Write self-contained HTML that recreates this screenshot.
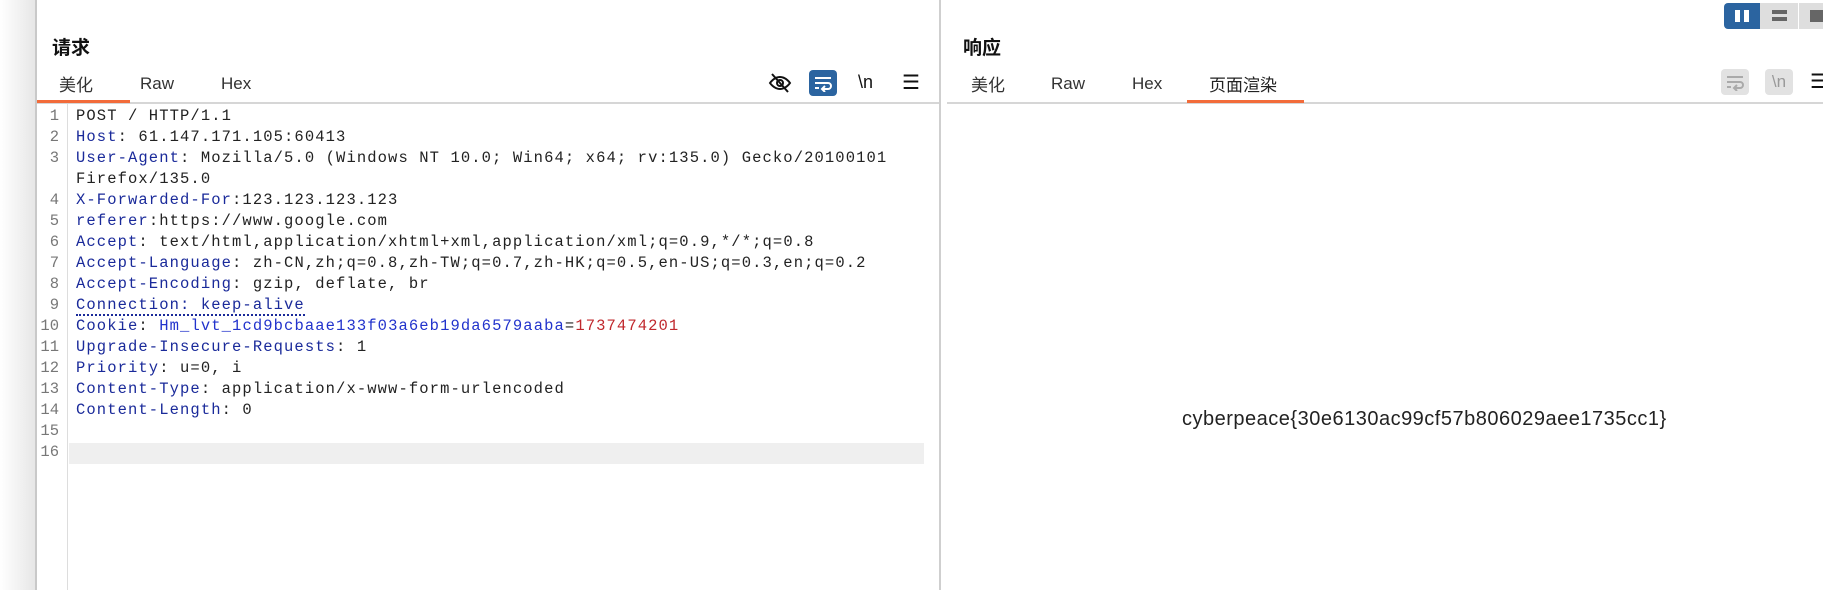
<!DOCTYPE html>
<html><head><meta charset="utf-8"><style>
*{margin:0;padding:0;box-sizing:border-box}
body{width:1823px;height:590px;background:#fff;position:relative;overflow:hidden;font-family:"Liberation Sans","Noto Sans CJK SC",sans-serif}
.a{position:absolute}
.strip{left:0;top:0;width:36px;height:590px;background:linear-gradient(90deg,#fff,#e6e6e6)}
.sl{left:35px;top:0;width:2px;height:590px;background:#c9c9c9}
.title{font-size:19px;font-weight:bold;color:#111}
.tab{font-size:17px;color:#333;top:74px;line-height:20px}
.cj{top:76px}
.code{font-family:"Liberation Mono",monospace;font-size:15.5px;letter-spacing:1.1px;color:#222;line-height:21px;white-space:pre}
.k{color:#1a2a9a}
.num{font-family:"Liberation Mono",monospace;font-size:15.5px;color:#777;line-height:21px;text-align:right;width:26px;left:33px;top:106px;white-space:pre}
</style></head><body>
<div class="a strip"></div><div class="a sl"></div>
<div class="a" style="left:939px;top:0;width:8px;height:590px;background:#fff;border-left:2px solid #cfcfcf"></div>

<div class="a title" style="left:52px;top:33px">请求</div>
<div class="a tab cj" style="left:59px">美化</div>
<div class="a tab" style="left:140px">Raw</div>
<div class="a tab" style="left:221px">Hex</div>
<div class="a" style="left:37px;top:102px;width:902px;height:2px;background:#d6d6d6"></div>
<div class="a" style="left:37px;top:100px;width:93px;height:3px;background:#f26b3a"></div>

<svg class="a" style="left:768px;top:71px" width="24" height="24" viewBox="0 0 24 24" fill="none" stroke="#111" stroke-width="2"><path d="M2 12s4-6 10-6 10 6 10 6-4 6-10 6S2 12 2 12z"/><circle cx="12" cy="12" r="3"/><path d="M4 3l16 18"/></svg>
<div class="a" style="left:809px;top:70px;width:28px;height:26px;background:#2b64a0;border-radius:4px"></div>
<svg class="a" style="left:813px;top:74px" width="20" height="18" viewBox="0 0 20 18" fill="none" stroke="#fff" stroke-width="2"><path d="M2 4h16M2 9h13a3 3 0 010 6h-5M12 12l-3 3 3 3M2 14h4"/></svg>
<div class="a" style="left:858px;top:72px;font-size:18px;color:#111">\n</div>
<div class="a" style="left:902px;top:70px;font-size:20px;color:#111">☰</div>

<div class="a" style="left:69px;top:443px;width:855px;height:21px;background:#efefef"></div>
<div class="a" style="left:67px;top:104px;width:1px;height:486px;background:#ddd"></div>
<div class="a num">1
2
3

4
5
6
7
8
9
10
11
12
13
14
15
16</div>
<div class="a code" style="left:76px;top:106px">POST / HTTP/1.1
<span class="k">Host</span>: 61.147.171.105:60413
<span class="k">User-Agent</span>: Mozilla/5.0 (Windows NT 10.0; Win64; x64; rv:135.0) Gecko/20100101
Firefox/135.0
<span class="k">X-Forwarded-For</span>:123.123.123.123
<span class="k">referer</span>:https://www.google.com
<span class="k">Accept</span>: text/html,application/xhtml+xml,application/xml;q=0.9,*/*;q=0.8
<span class="k">Accept-Language</span>: zh-CN,zh;q=0.8,zh-TW;q=0.7,zh-HK;q=0.5,en-US;q=0.3,en;q=0.2
<span class="k">Accept-Encoding</span>: gzip, deflate, br
<span class="k" style="border-bottom:2px dotted #1a2a9a">Connection: keep-alive</span>
<span class="k">Cookie</span>: <span style="color:#2233cc">Hm_lvt_1cd9bcbaae133f03a6eb19da6579aaba</span>=<span style="color:#c0282d">1737474201</span>
<span class="k">Upgrade-Insecure-Requests</span>: 1
<span class="k">Priority</span>: u=0, i
<span class="k">Content-Type</span>: application/x-www-form-urlencoded
<span class="k">Content-Length</span>: 0
</div>

<div class="a title" style="left:963px;top:33px">响应</div>
<div class="a tab cj" style="left:971px">美化</div>
<div class="a tab" style="left:1051px">Raw</div>
<div class="a tab" style="left:1132px">Hex</div>
<div class="a tab cj" style="left:1209px;color:#222">页面渲染</div>
<div class="a" style="left:947px;top:102px;width:876px;height:2px;background:#d6d6d6"></div>
<div class="a" style="left:1187px;top:100px;width:117px;height:3px;background:#f26b3a"></div>

<div class="a" style="left:1721px;top:69px;width:28px;height:26px;background:#e2e2e2;border-radius:4px"></div>
<svg class="a" style="left:1725px;top:73px" width="20" height="18" viewBox="0 0 20 18" fill="none" stroke="#aaa" stroke-width="2"><path d="M2 4h16M2 9h13a3 3 0 010 6h-5M12 12l-3 3 3 3M2 14h4"/></svg>
<div class="a" style="left:1765px;top:69px;width:28px;height:26px;background:#e2e2e2;border-radius:4px;color:#999;font-size:17px;text-align:center;line-height:26px">\n</div>
<div class="a" style="left:1810px;top:69px;font-size:20px;color:#111">☰</div>

<div class="a" style="left:1724px;top:3px;width:36px;height:26px;background:#2b64a0;border-radius:4px 0 0 4px"></div>
<div class="a" style="left:1735px;top:10px;width:5px;height:12px;background:#fff"></div>
<div class="a" style="left:1744px;top:10px;width:5px;height:12px;background:#fff"></div>
<div class="a" style="left:1760px;top:3px;width:38px;height:26px;background:#dedede"></div>
<div class="a" style="left:1772px;top:10px;width:15px;height:4px;background:#666"></div>
<div class="a" style="left:1772px;top:17px;width:15px;height:4px;background:#666"></div>
<div class="a" style="left:1799px;top:3px;width:24px;height:26px;background:#dedede"></div>
<div class="a" style="left:1810px;top:10px;width:13px;height:12px;background:#666"></div>

<div class="a" style="left:1182px;top:408px;font-size:20px;letter-spacing:0.5px;color:#222">cyberpeace{30e6130ac99cf57b806029aee1735cc1}</div>
</body></html>
